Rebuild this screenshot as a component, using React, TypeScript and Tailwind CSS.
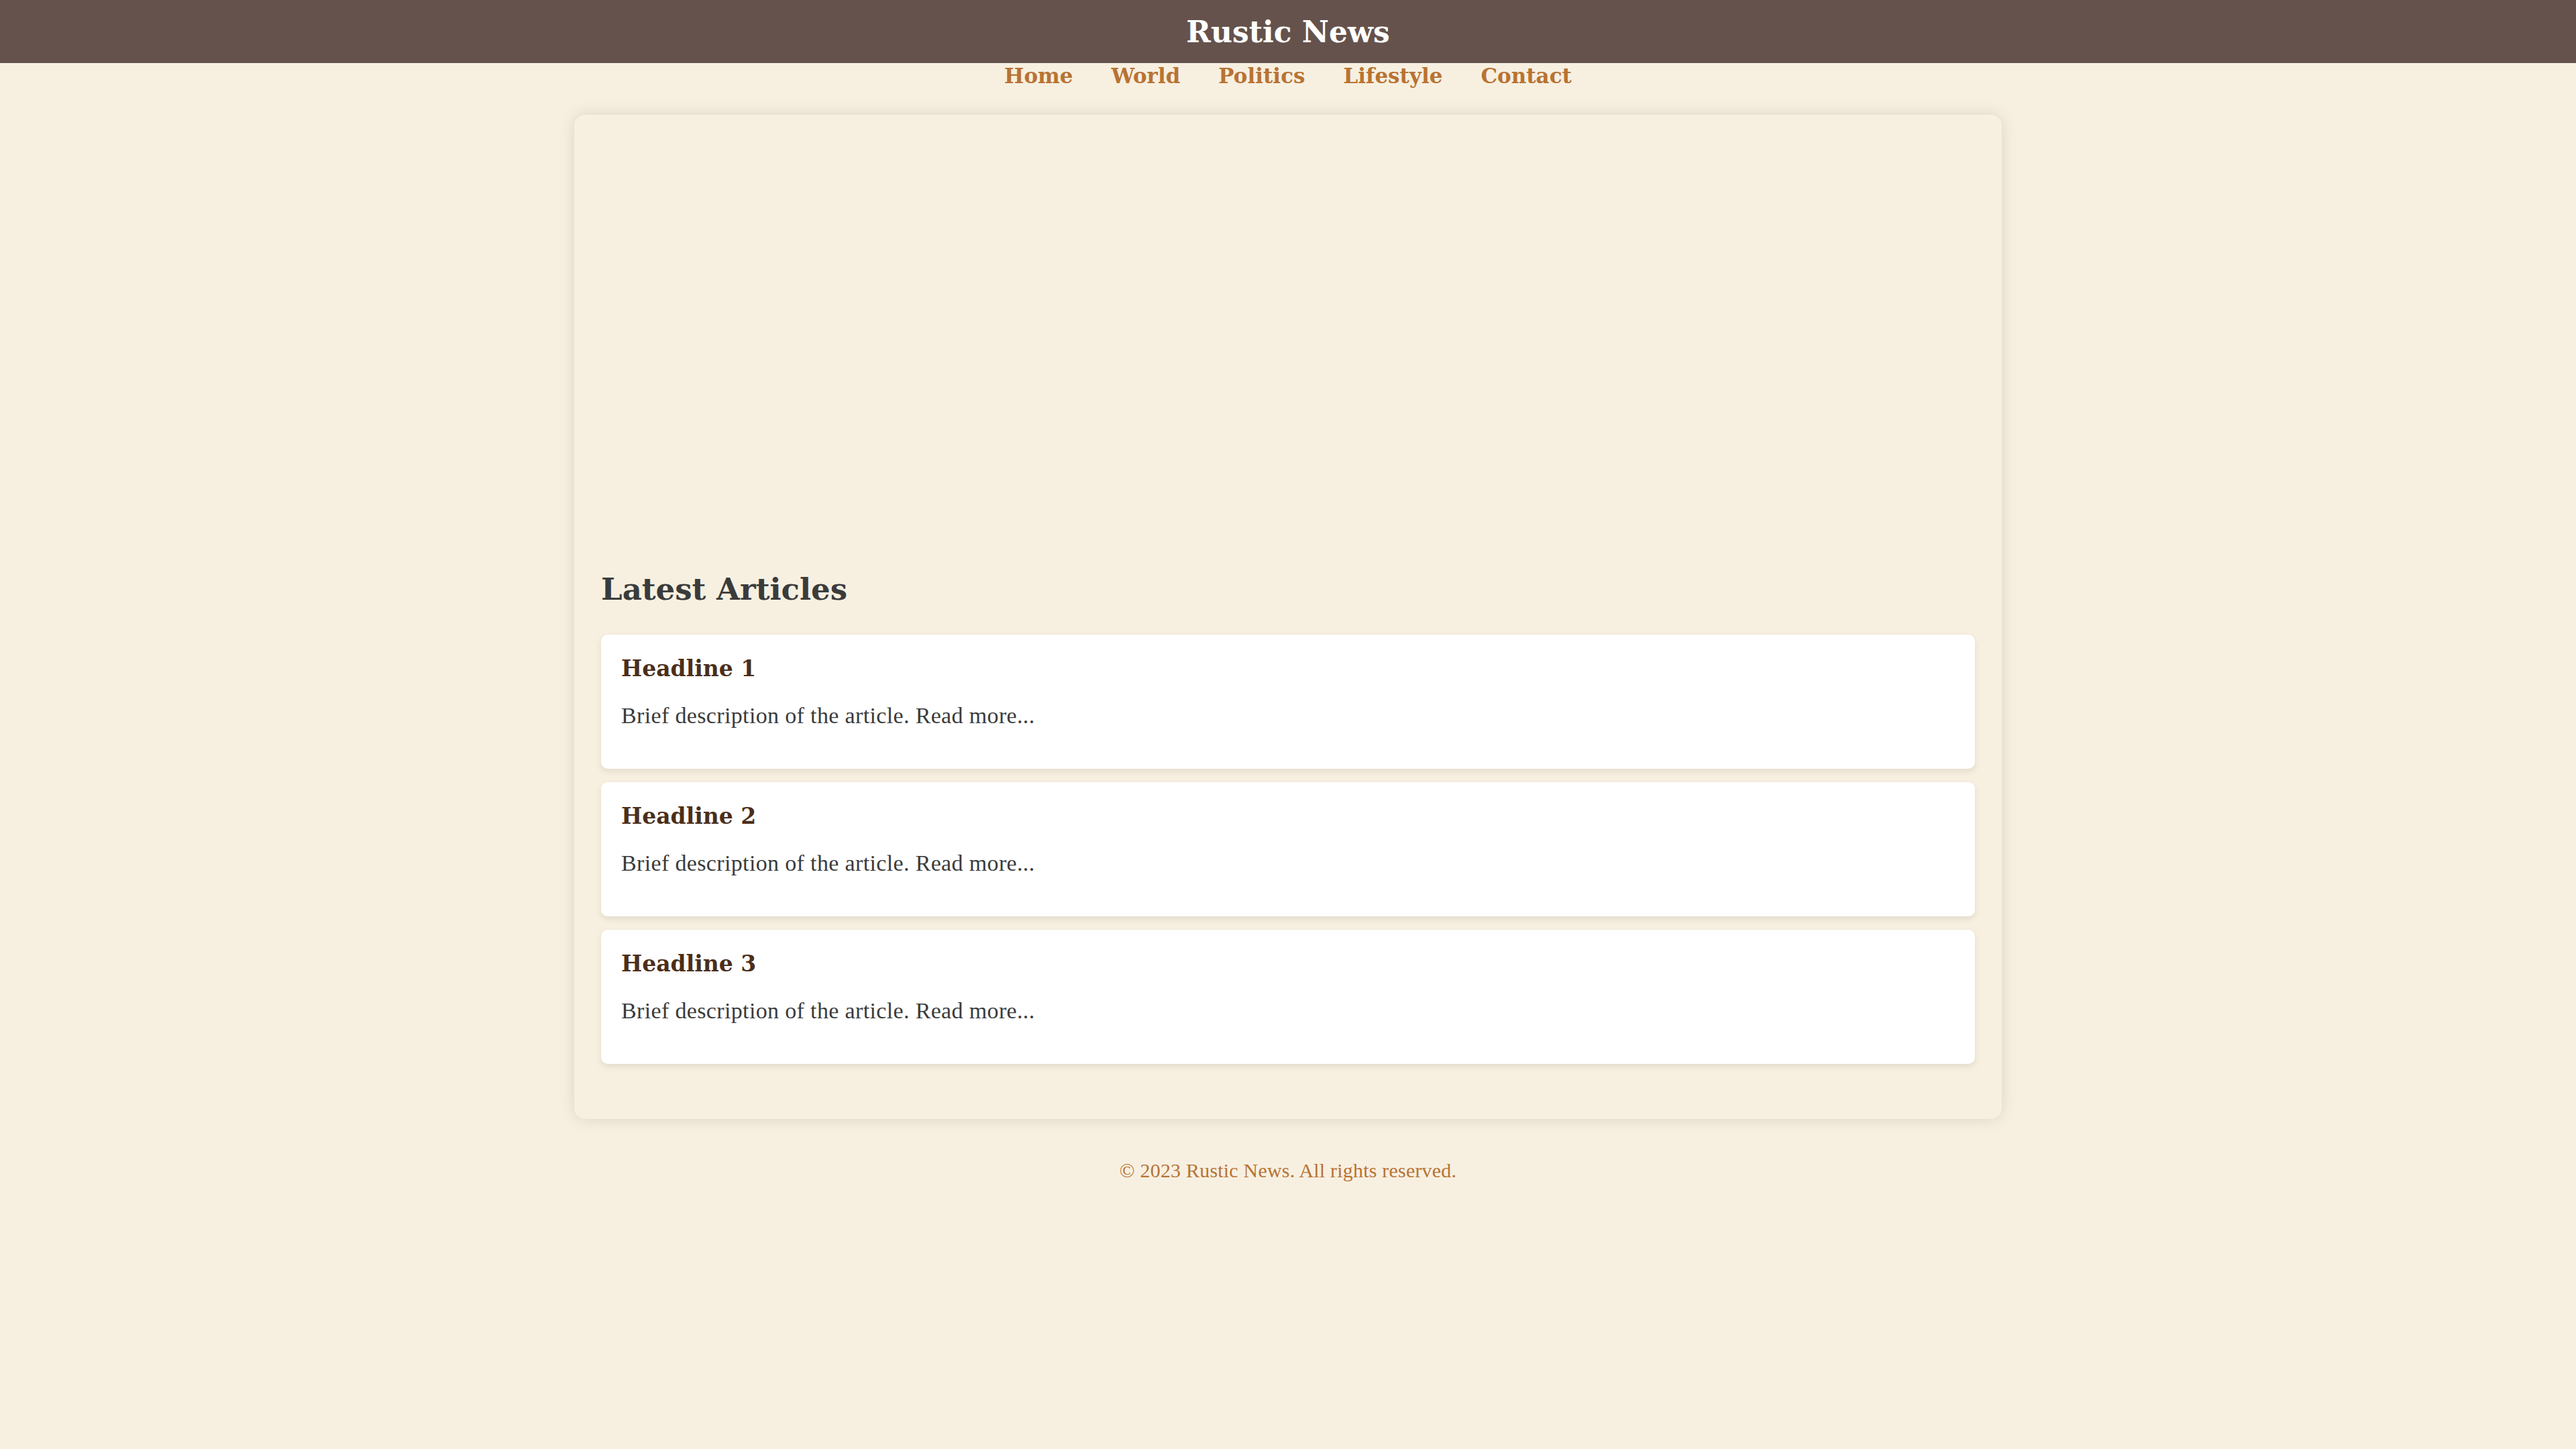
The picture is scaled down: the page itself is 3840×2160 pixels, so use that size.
// App.tsx
const NAV = ['Home', 'World', 'Politics', 'Lifestyle', 'Contact']

const ARTICLES = [
  { id: 1, title: 'Headline 1', body: 'Brief description of the article. Read more...' },
  { id: 2, title: 'Headline 2', body: 'Brief description of the article. Read more...' },
  { id: 3, title: 'Headline 3', body: 'Brief description of the article. Read more...' },
]

const bold = "font-['DejaVu_Serif','Liberation_Serif',serif] font-bold"
const plain = "font-['Liberation_Serif','DejaVu_Serif',serif]"

export default function App() {
  return (
    <div className="min-h-screen bg-[#f7f0e1] pb-[300px]">
      {/* Header */}
      <header className="h-[94px] bg-[#65524c] flex items-center justify-center">
        <h1 className={`${bold} text-[44px] leading-[54px] text-white pt-[2px]`}>Rustic News</h1>
      </header>

      {/* Nav */}
      <nav className="flex justify-center gap-[57px] pt-[1px] h-[38px]">
        {NAV.map(item => (
          <a key={item} href="#" className={`${bold} text-[31px] leading-[37px] text-[#b87333]`}>
            {item}
          </a>
        ))}
      </nav>

      {/* Main */}
      <main className="mt-[39px] mx-auto w-[2128px] rounded-2xl bg-[#f7f0e1] shadow-[0_0_22px_rgba(80,60,30,0.16)] px-[40px] pt-[40px] pb-[82px]">
        {/* hero image slot (empty) */}
        <div className="h-[596px]" />

        <h2 className={`${bold} mt-[44px] text-[45px] leading-[56px] text-[#3b3b3b]`}>Latest Articles</h2>

        <div className="mt-[39px] flex flex-col gap-[20px]">
          {ARTICLES.map(a => (
            <article key={a.id} className="bg-white rounded-[10px] shadow-[0_4px_10px_rgba(80,60,30,0.12)] px-[30px] pt-[30px] pb-[60px]">
              <h3 className={`${bold} text-[33px] leading-[42px] text-[#4b2e1a]`}>{a.title}</h3>
              <p className={`${plain} mt-[30px] text-[34px] leading-[38px] tracking-[0.35px] text-[#3b3b3b]`}>{a.body}</p>
            </article>
          ))}
        </div>
      </main>

      {/* Footer */}
      <footer className={`${plain} mt-[60px] text-center text-[30px] leading-[34px] tracking-[0.2px] text-[#b87333]`}>
        © 2023 Rustic News. All rights reserved.
      </footer>
    </div>
  )
}
